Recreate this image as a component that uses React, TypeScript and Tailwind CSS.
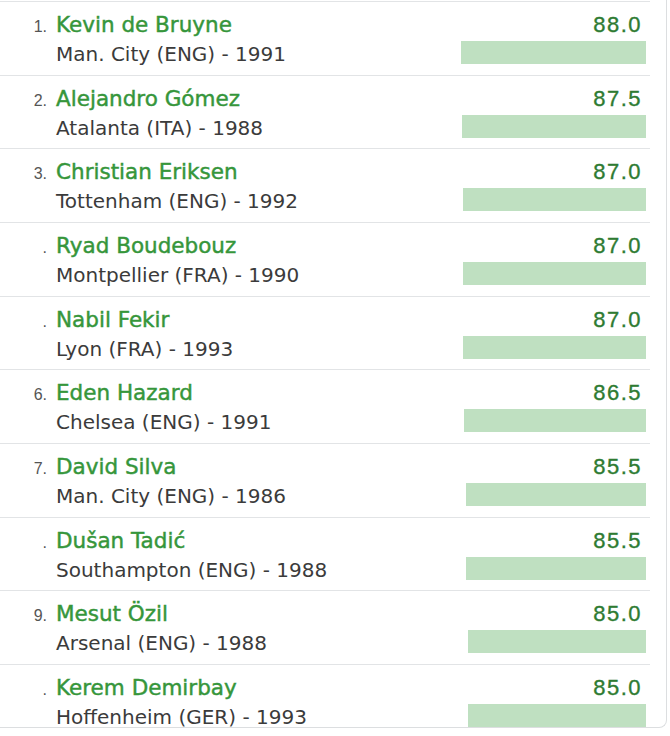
const players = [
  { rank: "1.", name: "Kevin de Bruyne", club: "Man. City (ENG) - 1991", score: 88.0 },
  { rank: "2.", name: "Alejandro Gómez", club: "Atalanta (ITA) - 1988", score: 87.5 },
  { rank: "3.", name: "Christian Eriksen", club: "Tottenham (ENG) - 1992", score: 87.0 },
  { rank: ".", name: "Ryad Boudebouz", club: "Montpellier (FRA) - 1990", score: 87.0 },
  { rank: ".", name: "Nabil Fekir", club: "Lyon (FRA) - 1993", score: 87.0 },
  { rank: "6.", name: "Eden Hazard", club: "Chelsea (ENG) - 1991", score: 86.5 },
  { rank: "7.", name: "David Silva", club: "Man. City (ENG) - 1986", score: 85.5 },
  { rank: ".", name: "Dušan Tadić", club: "Southampton (ENG) - 1988", score: 85.5 },
  { rank: "9.", name: "Mesut Özil", club: "Arsenal (ENG) - 1988", score: 85.0 },
  { rank: ".", name: "Kerem Demirbay", club: "Hoffenheim (GER) - 1993", score: 85.0 },
];

function PlayerRow({
  rank,
  name,
  club,
  score,
}: {
  rank: string;
  name: string;
  club: string;
  score: number;
}) {
  return (
    <div className="flex h-[73.67px] shrink-0 justify-between border-t border-[#e2e4e6] pt-[10px] pr-1">
      <div className="min-w-0">
        <div className="flex items-baseline">
          <span className="w-[47px] shrink-0 text-right font-['Liberation_Sans',Arial,sans-serif] text-[16px] text-[#555]">
            {rank}
          </span>
          <span className="ml-[9px] font-['DejaVu_Sans',sans-serif] text-[21.5px] leading-[26px] text-[#36963b] [-webkit-text-stroke:0.45px_#36963b]">
            {name}
          </span>
        </div>
        <p className="mt-[6px] pl-[56px] font-['DejaVu_Sans',sans-serif] text-[20px] leading-[18px] text-[#3b3b3b]">
          {club}
        </p>
      </div>
      <div className="flex w-[200px] shrink-0 flex-col items-end">
        <span className="pr-1 font-['Liberation_Sans',Arial,sans-serif] text-[22px] leading-[26px] tracking-[1.5px] text-[#2e7b32] [-webkit-text-stroke:0.35px_#2e7b32]">
          {score.toFixed(1)}
        </span>
        <div
          className="mt-[3px] h-[23px] bg-[#bfe0c1]"
          style={{ width: `${score * 2.1}px` }}
        />
      </div>
    </div>
  );
}

export default function App() {
  return (
    <div className="h-[736px] w-[670px] bg-white">
      <div className="flex h-[728px] w-[667px] flex-col overflow-hidden rounded-br-lg border-r border-b border-[#dcdee0] pt-px pr-4">
        {players.map((player) => (
          <PlayerRow key={player.name} {...player} />
        ))}
      </div>
    </div>
  );
}
